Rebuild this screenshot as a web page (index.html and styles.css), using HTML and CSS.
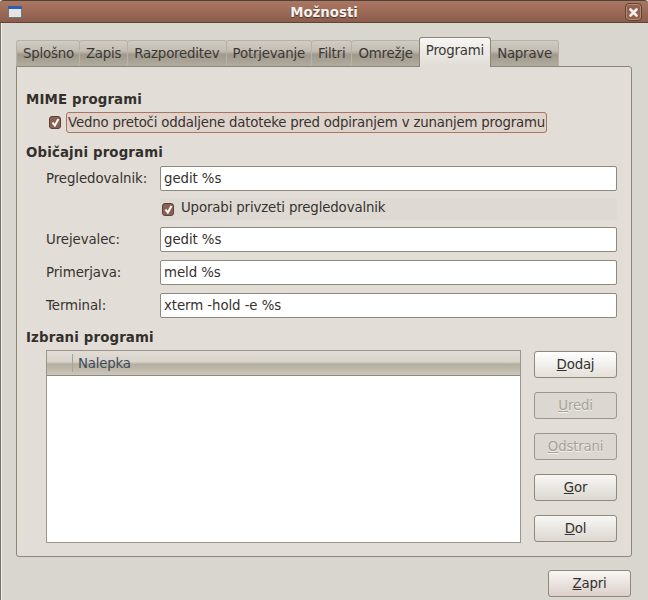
FILE: index.html
```html
<!DOCTYPE html>
<html lang="sl">
<head>
<meta charset="utf-8">
<title>Možnosti</title>
<link rel="stylesheet" href="styles.css">
</head>
<body>
<div class="window">
  <header class="titlebar">
    <svg class="winicon" width="14" height="12" viewBox="0 0 14 12"><rect x="0.5" y="0.5" width="13" height="11" fill="#e3e6e2" stroke="#6f7880"/><rect x="0" y="0" width="14" height="3" fill="#2f5fb0"/></svg>
    <h1 class="title">Možnosti</h1>
    <div class="closebtn"><svg width="11" height="11" viewBox="0 0 11 11"><path d="M2.5 2.5 L8.5 8.5 M8.5 2.5 L2.5 8.5" stroke="#f4efec" stroke-width="2.6" stroke-linecap="round"/></svg></div>
  </header>
  <div class="content">
    <nav class="tabs">
      <span class="tab first">Splošno</span>
      <span class="tab">Zapis</span>
      <span class="tab">Razporeditev</span>
      <span class="tab">Potrjevanje</span>
      <span class="tab">Filtri</span>
      <span class="tab">Omrežje</span>
      <span class="tab active">Programi</span>
      <span class="tab">Naprave</span>
    </nav>
    <main class="panel">
      <h2 class="heading h-mime">MIME programi</h2>
      <div class="check-row">
        <span class="checkbox"><svg width="9" height="9" viewBox="0 0 9 9"><path d="M1.5 4.5 L3.8 7.5 L7.5 1" fill="none" stroke="#fff" stroke-width="2"/></svg></span>
        <span class="focused">Vedno pretoči oddaljene datoteke pred odpiranjem v zunanjem programu</span>
      </div>
      <h2 class="heading h-common">Običajni programi</h2>
      <div class="form">
        <label class="lbl">Pregledovalnik:</label>
        <div class="entry">gedit %s</div>
        <div class="check-strip">
          <span class="checkbox"><svg width="9" height="9" viewBox="0 0 9 9"><path d="M1.5 4.5 L3.8 7.5 L7.5 1" fill="none" stroke="#fff" stroke-width="2"/></svg></span>
          <span class="strip-text">Uporabi privzeti pregledovalnik</span>
        </div>
        <label class="lbl">Urejevalec:</label>
        <div class="entry">gedit %s</div>
        <label class="lbl">Primerjava:</label>
        <div class="entry">meld %s</div>
        <label class="lbl">Terminal:</label>
        <div class="entry">xterm -hold -e %s</div>
      </div>
      <h2 class="heading h-chosen">Izbrani programi</h2>
      <div class="chosen">
        <div class="list">
          <div class="list-head"><span class="col-blank"></span><span class="col-label">Nalepka</span></div>
        </div>
        <div class="buttons">
          <button class="btn hot"><u>D</u>odaj</button>
          <button class="btn off" disabled><u>U</u>redi</button>
          <button class="btn off" disabled><u>O</u>dstrani</button>
          <button class="btn"><u>G</u>or</button>
          <button class="btn"><u>D</u>ol</button>
        </div>
      </div>
    </main>
    <footer class="footer"><button class="btn zapri"><u>Z</u>apri</button></footer>
  </div>
</div>
</body>
</html>
```
FILE: styles.css
```css
* { box-sizing: border-box; }
html, body { margin: 0; padding: 0; }
body {
  width: 648px;
  height: 600px;
  overflow: hidden;
  font-family: "DejaVu Sans", sans-serif;
  font-size: 13.33px;
  letter-spacing: -0.2px;
  color: #35332f;
  background: #d9d5cf;
}
.window {
  width: 648px;
  height: 600px;
  display: flex;
  flex-direction: column;
}
.titlebar {
  height: 23px;
  flex: none;
  position: relative;
  display: flex;
  align-items: center;
  justify-content: center;
  padding-top: 2px;
  background: linear-gradient(#ab7763, #8c5d4b);
  border-top: 1px solid #4f4238;
  border-bottom: 1px solid #5e4437;
  border-radius: 4px 4px 0 0;
}
.winicon { position: absolute; left: 8px; top: 5px; }
.title {
  margin: 0;
  font-size: 13.33px;
  font-weight: bold;
  letter-spacing: 0;
  color: #f6f1ee;
  text-shadow: 0 1px 1px #4d3226;
}
.closebtn {
  position: absolute;
  right: 6px;
  top: 2px;
  width: 17px;
  height: 18px;
  border: 1px solid #5f4436;
  border-radius: 4px;
  background: #92624f;
  box-shadow: inset 0 0 0 1px #b08b7a;
  display: flex;
  align-items: center;
  justify-content: center;
}
.content {
  flex: 1;
  padding: 17px 16px 0 15px;
  border-left: 1px solid #77705f;
  box-shadow: inset 1px 0 0 #f0eeea;
}
.tabs {
  display: flex;
  align-items: flex-end;
  height: 26px;
  position: relative;
  z-index: 1;
}
.tab {
  height: 26px;
  padding: 5px 6px 0;
  border: 1px solid #b7b1a6;
  border-bottom: 0;
  border-radius: 3px 3px 0 0;
  margin-right: -1px;
  background: linear-gradient(#d1ccc4 0, #c2bcb2 40%, #9f988c 55%, #b2ac9f 100%);
  color: #3b3935;
  white-space: nowrap;
}
.tab.first { padding-right: 5px; }
.tab.active {
  height: 30px;
  padding-top: 5px;
  position: relative;
  top: 1px;
  background: linear-gradient(#f7f6f4, #e1dcd5);
  border-color: #8d8576;
  z-index: 2;
}
.panel {
  height: 491px;
  width: 616px;
  border: 1px solid #8d8576;
  border-radius: 0 3px 3px 3px;
  background: #e2ddd6;
  padding: 0 14px 0 9px;
}
.heading {
  margin: 0;
  font-size: 13.33px;
  font-weight: bold;
  letter-spacing: 0.15px;
  line-height: 16px;
  color: #33302c;
}
.h-mime { margin-top: 25px; }
.h-common { margin-top: 12px; }
.h-chosen { margin-top: 12px; }
.check-row {
  display: flex;
  align-items: center;
  margin: 4px 0 0 23px;
  gap: 5px;
}
.checkbox {
  flex: none;
  width: 12px;
  height: 13px;
  border-radius: 3px;
  border: 1px solid #5c4236;
  background: #8a6152;
  display: flex;
  align-items: center;
  justify-content: center;
}
.focused {
  height: 21px;
  line-height: 19px;
  padding: 0 1px;
  border: 1px solid #a87560;
  border-radius: 3px;
  background: #e0d3cc;
  white-space: nowrap;
}
.form {
  margin: 5px 0 0 20px;
  display: grid;
  grid-template-columns: 114px 457px;
  row-gap: 8px;
  align-items: center;
  letter-spacing: -0.08px;
}
.lbl { line-height: 16px; }
.entry {
  height: 25px;
  line-height: 23px;
  padding: 0 3px;
  border: 1px solid #8f887b;
  border-radius: 2px;
  background: #fff;
  color: #34322e;
}
.check-strip {
  grid-column: 2;
  height: 22px;
  margin: -1px 0;
  display: flex;
  align-items: center;
  gap: 7px;
  padding-left: 2px;
  background: #dedad3;
}
.strip-text {
  line-height: 20px;
  margin-bottom: 2px;
  letter-spacing: -0.14px;
}
.chosen {
  display: flex;
  margin: 4px 0 0 20px;
}
.list {
  width: 475px;
  height: 193px;
  border: 1px solid #9c9588;
  background: #fff;
}
.list-head {
  height: 25px;
  display: flex;
  align-items: stretch;
  border-bottom: 1px solid #8f887b;
  background: linear-gradient(#e1dcd5 0, #d8d3cb 45%, #b4ae9f 55%, #cbc6bc 100%);
}
.col-blank { width: 26px; border-right: 1px solid #a9a395; margin: 3px 0; }
.col-label { padding: 5px 5px 0; color: #3e4a5c; }
.buttons {
  margin: 1px 0 0 13px;
  display: flex;
  flex-direction: column;
  gap: 14px;
}
.btn {
  width: 83px;
  height: 27px;
  padding: 0;
  font: inherit;
  letter-spacing: -0.2px;
  color: #33312d;
  border: 1px solid #8f887b;
  border-radius: 3px;
  background: linear-gradient(#f8f7f5, #dcd7d0);
}
.btn.hot { background: linear-gradient(#ffffff, #e4e0da); }
.btn.off {
  color: #a5a196;
  background: #dcd8d1;
  border-color: #9d968a;
  text-shadow: 0 1px 0 #f4f2ee;
}
.footer {
  display: flex;
  justify-content: flex-end;
  padding: 13px 1px 0 0;
}
.zapri { background: linear-gradient(#f8f6f4, #dccfc9); }
```
